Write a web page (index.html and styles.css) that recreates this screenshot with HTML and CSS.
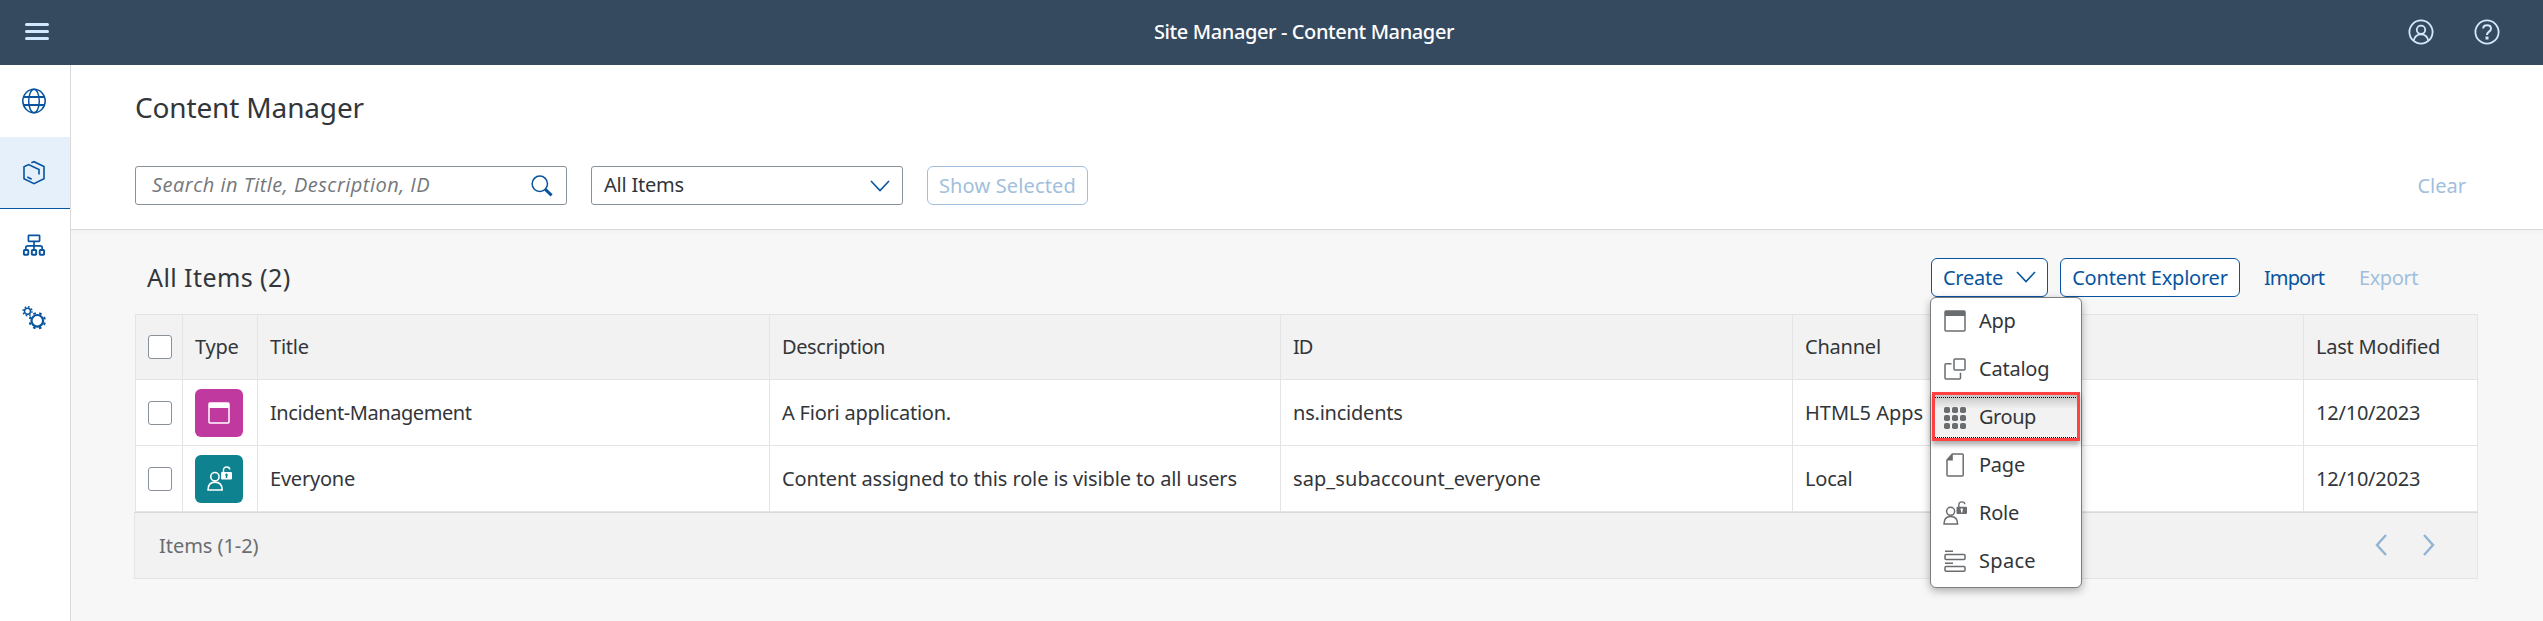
FILE: index.html
```
<!DOCTYPE html>
<html lang="en">
<head>
<meta charset="utf-8">
<title>Site Manager - Content Manager</title>
<link rel="stylesheet" href="styles.css">
</head>
<body>
<svg class="defs" aria-hidden="true">
  <symbol id="i-role" viewBox="0 0 24 24">
    <g fill="none" stroke="currentColor" stroke-width="1.5">
      <circle cx="7.600" cy="10.300" r="4"/>
      <path d="M1 23.100c0-5 2.300-7.600 6.600-7.600s7 2.600 7 7.600z"/>
      <path d="M15.800 7V4.200c0-2 1-3.300 3-3.300s3 .9 3 2.400" stroke-width="1.400"/>
    </g>
    <path fill="currentColor" fill-rule="evenodd" d="M14.500 5.800h8.500a1 1 0 0 1 1 1v5.200a1 1 0 0 1-1 1h-8.500a1 1 0 0 1-1-1V6.800a1 1 0 0 1 1-1zm4.200 1.400a1.300 1.300 0 0 0-.7 2.300v2h1.500v-2a1.300 1.300 0 0 0-.8-2.300z"/>
  </symbol>
  <symbol id="i-app" viewBox="0 0 22 22">
    <rect x="1" y="1" width="20" height="20" rx="1" fill="none" stroke="currentColor" stroke-width="1.500"/>
    <path fill="currentColor" d="M1 1h20v5H1z"/>
  </symbol>
</svg>

<header class="shell">
  <svg class="shell-menu" width="24" height="17" viewBox="0 0 24 17"><path d="M1.500 1.500h21M1.500 8.500h21M1.500 15.500h21" stroke="currentColor" stroke-width="3" stroke-linecap="round"/></svg>
  <h1 class="shell-title">Site Manager - Content Manager</h1>
  <div class="shell-actions">
    <svg width="26" height="26" viewBox="0 0 26 26" fill="none" stroke="currentColor" stroke-width="1.800"><circle cx="13" cy="13" r="11.600"/><circle cx="13" cy="10.800" r="4.200"/><path d="M5.600 21.600c.9-4 3.500-6.300 7.400-6.300s6.500 2.300 7.400 6.300"/></svg>
    <svg width="26" height="26" viewBox="0 0 26 26" fill="none" stroke="currentColor" stroke-width="1.800"><circle cx="13" cy="13" r="11.600"/><path d="M9.200 9.600c0-2.100 1.500-3.400 3.900-3.400s3.900 1.300 3.900 3.300c0 1.700-1 2.500-2.200 3.300-1.200.8-1.800 1.300-1.800 3.100" stroke-width="2"/><rect x="12" y="18" width="2" height="2" fill="currentColor" stroke-width="1"/></svg>
  </div>
</header>

<div class="body">
  <nav class="side">
    <a class="side-item"><svg width="24" height="26" viewBox="0 0 24 26" fill="none" stroke="currentColor" stroke-width="1.500"><ellipse cx="12" cy="13" rx="11.200" ry="11.700"/><ellipse cx="12" cy="13" rx="5.300" ry="11.700"/><path d="M1.500 9h21M1.500 17h21" stroke-width="2"/></svg></a>
    <a class="side-item side-item-on"><svg width="24" height="26" viewBox="0 0 24 26" fill="none" stroke="currentColor" stroke-width="1.600"><path d="M9.300 2.700 12 1.700l10 4.800v12.300L12 23.700 2 18.800V6.800l4.600-2.200 10.400 5v4.800"/><path d="m5.300 17 4.400 2.300"/></svg></a>
    <a class="side-item"><svg width="24" height="26" viewBox="0 0 24 26" fill="none" stroke="currentColor" stroke-width="1.700"><rect x="6.400" y="3.400" width="11.200" height="6" rx=".6"/><path d="M12 9.400v7.600M3.800 17.500v-1.700q0-2 2-2h12.400q2 0 2 2v1.700"/><g stroke-width="1.900"><rect x="1.900" y="18" width="4.400" height="4.800" rx=".8"/><rect x="9.800" y="18" width="4.400" height="4.800" rx=".8"/><rect x="17.700" y="18" width="4.400" height="4.800" rx=".8"/></g></svg></a>
    <a class="side-item"><svg width="24" height="26" viewBox="0 0 24 26" fill="none" stroke="currentColor"><circle cx="5.500" cy="6.200" r="3" stroke-width="1.500"/><circle cx="5.500" cy="6.200" r="4.500" stroke-width="1.400" stroke-dasharray="1.700 1.834"/><circle cx="15.300" cy="15.800" r="5.800" stroke-width="2.200"/><circle cx="15.300" cy="15.800" r="7.700" stroke-width="2" stroke-dasharray="2.600 3.448" stroke-dashoffset="-1.700"/></svg></a>
  </nav>

  <main class="main">
    <section class="page-head">
      <h2 class="page-title">Content Manager</h2>
      <div class="filters">
        <div class="field search">
          <span class="placeholder">Search in Title, Description, ID</span>
          <svg width="22" height="22" viewBox="0 0 22 22" fill="none" stroke="currentColor"><circle cx="8.800" cy="8.800" r="7.700" stroke-width="1.500"/><path d="m14.300 14.300 6.300 6" stroke-width="3"/></svg>
        </div>
        <div class="field select">
          <span>All Items</span>
          <svg width="20" height="12" viewBox="0 0 20 12"><path d="m1 1 9 9.500L19 1" fill="none" stroke="currentColor" stroke-width="1.600"/></svg>
        </div>
        <button class="btn btn-off show-selected">Show Selected</button>
        <button class="btn btn-plain btn-off clear">Clear</button>
      </div>
    </section>

    <section class="content">
      <div class="toolbar">
        <h3 class="list-title">All Items (2)</h3>
        <div class="create-wrap">
          <button class="btn create">Create<svg width="20" height="12" viewBox="0 0 20 12"><path d="m1 1 9 9.500L19 1" fill="none" stroke="currentColor" stroke-width="1.600"/></svg></button>
          <ul class="menu">
            <li class="menu-item"><svg width="22" height="22"><use href="#i-app"/></svg><span>App</span></li>
            <li class="menu-item"><svg width="22" height="22" viewBox="0 0 22 22" fill="none" stroke="currentColor" stroke-width="1.500"><rect x="10" y="1" width="11" height="11" rx="1"/><path d="M7.500 5.800H2a1 1 0 0 0-1 1V20a1 1 0 0 0 1 1h13.500a1 1 0 0 0 1-1v-5.300"/></svg><span>Catalog</span></li>
            <li class="menu-item menu-item-on"><svg width="22" height="22" viewBox="0 0 22 22" fill="currentColor"><g id="dots"><rect x="0" y="0" width="6" height="6" rx="1.800"/><rect x="8" y="0" width="6" height="6" rx="1.800"/><rect x="16" y="0" width="6" height="6" rx="1.800"/></g><use href="#dots" y="8"/><use href="#dots" y="16"/></svg><span class="t-group">Group</span></li>
            <li class="menu-item"><svg width="22" height="24" viewBox="0 0 22 24"><path d="M8.300 1H18.200a1 1 0 0 1 1 1v20a1 1 0 0 1-1 1H4a1 1 0 0 1-1-1V7z" fill="none" stroke="currentColor" stroke-width="1.500"/><path d="M8.800 1v6.500H2.600z" fill="currentColor"/></svg><span>Page</span></li>
            <li class="menu-item"><svg class="wide" width="24" height="24"><use href="#i-role"/></svg><span>Role</span></li>
            <li class="menu-item"><svg width="22" height="22" viewBox="0 0 22 22" fill="none" stroke="currentColor" stroke-width="1.500"><path d="M1 1.300h8M1 13.300h8"/><rect x="1" y="4.600" width="20" height="4.800" rx="1"/><rect x="1" y="16.600" width="20" height="4.600" rx="1"/></svg><span class="t-space">Space</span></li>
          </ul>
        </div>
        <button class="btn explorer">Content Explorer</button>
        <button class="btn btn-plain import">Import</button>
        <button class="btn btn-plain btn-off export">Export</button>
      </div>

      <div class="table">
        <div class="row row-head">
          <div class="cell cell-check"><i class="check"></i></div>
          <div class="cell">Type</div>
          <div class="cell">Title</div>
          <div class="cell t-desc">Description</div>
          <div class="cell t-id">ID</div>
          <div class="cell">Channel</div>
          <div class="cell">Last Modified</div>
        </div>
        <div class="row">
          <div class="cell cell-check"><i class="check"></i></div>
          <div class="cell"><span class="tile tile-app"><svg width="22" height="22"><use href="#i-app"/></svg></span></div>
          <div class="cell t-incident">Incident-Management</div>
          <div class="cell">A Fiori application.</div>
          <div class="cell">ns.incidents</div>
          <div class="cell t-apps">HTML5 Apps</div>
          <div class="cell">12/10/2023</div>
        </div>
        <div class="row">
          <div class="cell cell-check"><i class="check"></i></div>
          <div class="cell"><span class="tile tile-role"><svg width="25" height="25"><use href="#i-role"/></svg></span></div>
          <div class="cell">Everyone</div>
          <div class="cell t-long">Content assigned to this role is visible to all users</div>
          <div class="cell t-sub">sap_subaccount_everyone</div>
          <div class="cell">Local</div>
          <div class="cell">12/10/2023</div>
        </div>
      </div>
      <footer class="pager">
        <span>Items (1-2)</span>
        <div class="pager-nav">
          <svg width="12" height="22" viewBox="0 0 12 22"><path d="M11 1 2 11l9 10" fill="none" stroke="currentColor" stroke-width="2.400"/></svg>
          <svg width="12" height="22" viewBox="0 0 12 22"><path d="m1 1 9 10-9 10" fill="none" stroke="currentColor" stroke-width="2.400"/></svg>
        </div>
      </footer>
    </section>
  </main>
</div>
</body>
</html>
```
FILE: styles.css
```
* { box-sizing: border-box; }

body {
  margin: 0;
  height: 621px;
  overflow: hidden;
  display: flex;
  flex-direction: column;
  background: #f7f7f7;
  color: #32363a;
  font: 20px/27px "Noto Sans", "Open Sans", sans-serif;
  letter-spacing: -0.22px;
}

h1, h2, h3, ul { margin: 0; padding: 0; font-weight: 400; list-style: none; }
svg { display: block; flex: none; }
.defs { position: absolute; width: 0; height: 0; }

/* Shell bar */
.shell {
  height: 65px;
  flex: none;
  display: grid;
  grid-template-columns: 1fr auto 1fr;
  align-items: center;
  padding: 0 43px 2px 25px;
  background: #354a5f;
  color: #d1e8ff;
}
.shell-title {
  margin-left: 83px;
  font-size: 20px;
  line-height: 27px;
  font-weight: 500;
  letter-spacing: -0.39px;
  color: #fff;
}
.shell-actions { display: flex; justify-content: flex-end; gap: 40px; }

.body { flex: 1; display: flex; min-height: 0; }

/* Side navigation */
.side {
  width: 71px;
  flex: none;
  background: #fff;
  border-right: 1px solid #d9d9d9;
  color: #0854a0;
}
.side-item {
  height: 72px;
  display: flex;
  align-items: center;
  justify-content: center;
  padding-right: 2px;
  border-bottom: 1px solid transparent;
}
.side-item-on { background: #e5f0fa; border-bottom-color: #0854a0; }
.side-item:nth-child(3) { height: 73px; }

/* Page header and filters */
.main { flex: 1; min-width: 0; }
.page-head {
  height: 165px;
  padding: 23px 65px 0 64px;
  background: #fff;
  border-bottom: 1px solid #d9d9d9;
}
.page-title {
  height: 38px;
  margin-bottom: 40px;
  font-size: 28px;
  line-height: 38px;
  letter-spacing: -0.15px;
}
.filters { display: flex; align-items: center; }
.field {
  height: 39px;
  display: flex;
  align-items: center;
  justify-content: space-between;
  background: #fff;
  border: 1px solid #89919a;
  border-radius: 3px;
}
.field span { padding-bottom: 2px; }
.field svg { color: #0854a0; }
.search { width: 432px; padding: 0 13px 0 16px; margin-right: 24px; }
.placeholder { font-family: "Open Sans", "Noto Sans", sans-serif; font-style: italic; color: #74777a; letter-spacing: 0.49px; }
.select { width: 312px; padding: 0 12px; margin-right: 24px; }

.btn {
  height: 39px;
  padding: 0 10px 1px;
  display: flex;
  align-items: center;
  justify-content: center;
  white-space: nowrap;
  font: inherit;
  letter-spacing: -0.22px;
  color: #0854a0;
  background: #fff;
  border: 1px solid #0854a0;
  border-radius: 6px;
}
.btn-plain { background: none; border-color: transparent; }
.btn-off { color: #a1bfdc; border-color: #a1bfdc; }
.btn-plain.btn-off { border-color: transparent; }
.show-selected { width: 161px; letter-spacing: 0.15px; }
.clear { margin-left: auto; margin-right: 1px; letter-spacing: 0; }

/* List toolbar */
.content {
  padding: 28px 65px 0 63px;
  background: linear-gradient(#f2f2f2, #f7f7f7 6px);
}
.toolbar { height: 39px; display: flex; align-items: center; margin-bottom: 17px; }
.list-title {
  flex: 1;
  padding: 0 0 1px 13px;
  font-size: 25px;
  line-height: 34px;
  letter-spacing: 0.42px;
}
.create-wrap { position: relative; margin-right: 12px; }
.create { width: 117px; gap: 13px; }
.explorer { width: 180px; margin-right: 13px; }
.import { letter-spacing: -0.89px; margin-right: 13px; }
.export { letter-spacing: -0.43px; margin-right: 49px; }

/* Create menu */
.menu {
  position: absolute;
  left: -1px;
  top: 39px;
  z-index: 1;
  width: 152px;
  height: 291px;
  background: #fff;
  border: 1px solid #7b7e81;
  border-radius: 6px;
  box-shadow: 0 3px 9px rgba(0, 0, 0, .3);
}
.menu-item {
  height: 48px;
  display: flex;
  align-items: center;
  gap: 13px;
  padding-left: 13px;
}
.menu-item:first-child { margin-top: -2px; }
.menu-item svg { color: #6a6d70; margin-top: 2px; }
.menu-item .wide { margin-left: -1px; margin-right: -1px; }
.menu-item-on {
  height: 49px;
  margin: 0 1px -1px;
  padding: 0 0 0 9px;
  background:
    repeating-linear-gradient(90deg, #000 0 1px, transparent 1px 2px) 0 2px / 100% 1px no-repeat,
    repeating-linear-gradient(90deg, #000 0 1px, transparent 1px 2px) 0 100% / 100% 1px no-repeat,
    linear-gradient(#c3c3c3, #f2f2f2 14px);
  border: 3px solid #ff4141;
  box-shadow: 0 4px 5px rgba(0, 0, 0, .32);
}
.t-group { letter-spacing: -0.44px; }
.t-space { letter-spacing: 0.32px; }

/* Items table */
.table { margin-left: 1px; border: 1px solid #e4e4e4; border-bottom: 0; }
.row {
  display: grid;
  grid-template-columns: 47px 75px 512px 511px 512px 511px 1fr;
  height: 66px;
  background: #fff;
  border-bottom: 1px solid #e4e4e4;
}
.row-head { height: 65px; background: #f2f2f2; }
.row-head .cell:not(.cell-check) { padding-bottom: 1px; }
.cell {
  display: flex;
  align-items: center;
  padding: 0 12px;
  border-right: 1px solid #e4e4e4;
  white-space: nowrap;
}
.cell:last-child { border-right: 0; }
.cell-check { justify-content: center; padding: 0 0 0 2px; }
.check {
  width: 24px;
  height: 24px;
  background: #fff;
  border: 1px solid #89919a;
  border-radius: 3px;
}
.tile {
  width: 48px;
  height: 48px;
  display: flex;
  align-items: center;
  justify-content: center;
  color: #fff;
  border-radius: 6px;
}
.tile-app { background: #c0399f; }
.tile-role { background: #0f828f; }
.t-desc { letter-spacing: -0.42px; }
.t-id { letter-spacing: -1.1px; }
.t-incident { letter-spacing: -0.42px; }
.t-apps { letter-spacing: 0; }
.t-long { letter-spacing: -0.12px; }
.t-sub { letter-spacing: 0.08px; }

.pager {
  height: 67px;
  display: flex;
  align-items: center;
  justify-content: space-between;
  padding: 0 42px 1px 24px;
  background: #f2f2f2;
  border: 1px solid #e4e4e4;
  border-top-color: #d9d9d9;
  color: #6a6d70;
  letter-spacing: -0.05px;
}
.pager-nav { display: flex; gap: 36px; color: #91b3d4; }
```
